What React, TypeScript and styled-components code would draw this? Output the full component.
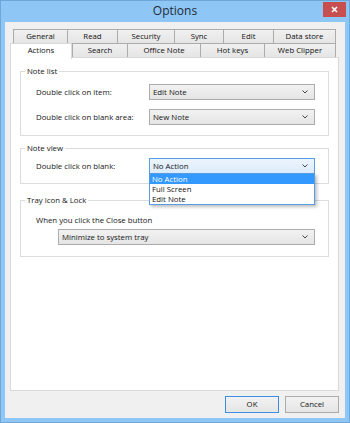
import * as React from 'react';
import styled, { createGlobalStyle, css } from 'styled-components';

const Global = createGlobalStyle`
  html, body {
    margin: 0;
    padding: 0;
    background: #8ec6f5;
  }
  body {
    font-family: 'Open Sans', 'Noto Sans', sans-serif;
    color: #151515;
  }
`;

const Window = styled.div`
  box-sizing: border-box;
  width: 350px;
  height: 423px;
  background: #8ec6f5;
  border: 1px solid #6ea6da;
  display: flex;
  flex-direction: column;
`;

const TitleBar = styled.div`
  height: 21px;
  display: grid;
  grid-template-columns: 1fr auto 1fr;
  align-items: start;
`;

const Title = styled.div`
  grid-column: 2;
  font-size: 12px;
  line-height: 20px;
  color: #1f2a36;
`;

const CloseButton = styled.div`
  grid-column: 3;
  justify-self: end;
  margin: 1px 3px 0 0;
  width: 23px;
  height: 15px;
  background: #c74f50;
  display: flex;
  align-items: center;
  justify-content: center;
`;

const Client = styled.div`
  flex: 1;
  margin: 0 4px 4px 4px;
  background: #f0f0f0;
  padding: 7px 5px 0 5px;
  display: flex;
  flex-direction: column;
`;

const TabRow = styled.div<{ $indent: number }>`
  display: flex;
  padding-left: ${p => p.$indent}px;
  height: 14px;
  align-items: flex-end;
`;

const Tab = styled.div<{ $w: number; $active?: boolean }>`
  box-sizing: border-box;
  width: ${p => p.$w}px;
  height: 14px;
  margin-right: -1px;
  border: 1px solid #acacac;
  border-bottom: none;
  background: linear-gradient(#f0f0f0, #e5e5e5);
  font-size: 7.8px;
  line-height: 12px;
  text-align: center;
  color: #111;
  ${p =>
    p.$active &&
    css`
      height: 16px;
      margin-bottom: -2px;
      position: relative;
      z-index: 1;
      background: #fff;
      border-color: #d9d9d9;
      line-height: 13px;
      margin-right: 0;
    `}
`;

const Panel = styled.div`
  box-sizing: border-box;
  width: 329px;
  height: 334px;
  background: #fff;
  border: 1px solid #d9d9d9;
  padding: 8px 9px 0 9px;
  display: flex;
  flex-direction: column;
`;

const Group = styled.fieldset<{ $gap: number; $pt: number; $pb: number; $rowGap: number }>`
  margin: ${p => p.$gap}px 0 0 0;
  padding: ${p => p.$pt}px 0 ${p => p.$pb}px 0;
  border: 1px solid #dcdcdc;
  box-shadow: inset 1px 1px 0 #fff;
  min-width: 0;
  display: flex;
  flex-direction: column;
  gap: ${p => p.$rowGap}px;
`;

const Legend = styled.legend`
  margin-left: 4px;
  padding: 0 2px;
  font-size: 7.8px;
  line-height: 10px;
`;

const Row = styled.div<{ $indent: number }>`
  display: flex;
  align-items: center;
  padding-left: ${p => p.$indent}px;
`;

const Label = styled.div<{ $w?: number }>`
  width: ${p => (p.$w ? `${p.$w}px` : 'auto')};
  font-size: 7.8px;
  line-height: 10px;
`;

const SelectWrap = styled.div`
  position: relative;
`;

const SelectBox = styled.div<{ $w: number; $focus?: boolean }>`
  box-sizing: border-box;
  width: ${p => p.$w}px;
  height: 16px;
  border: 1px solid #acacac;
  background: linear-gradient(#f2f2f2, #e5e5e5);
  display: flex;
  align-items: center;
  justify-content: space-between;
  padding: 0 6px 0 3px;
  font-size: 7.8px;
  ${p =>
    p.$focus &&
    css`
      border-color: #569de5;
      background: linear-gradient(#ecf4fc, #dcecfc);
    `}
`;

const DropList = styled.div`
  position: absolute;
  left: 0;
  top: 15px;
  box-sizing: border-box;
  width: 166px;
  border: 1px solid #569de5;
  background: #fff;
  box-shadow: 2px 2px 3px rgba(0, 0, 0, 0.25);
  z-index: 2;
`;

const DropItem = styled.div<{ $sel?: boolean }>`
  height: 10px;
  line-height: 10px;
  padding-left: 2px;
  font-size: 7.8px;
  background: ${p => (p.$sel ? '#3399ff' : '#fff')};
  color: ${p => (p.$sel ? '#fff' : '#111')};
`;

const Footer = styled.div`
  display: flex;
  justify-content: flex-end;
  gap: 6px;
  padding: 5px 1px 0 0;
`;

const Button = styled.div<{ $default?: boolean }>`
  box-sizing: border-box;
  width: 54px;
  height: 17px;
  border: 1px solid ${p => (p.$default ? '#3c8ee0' : '#acacac')};
  background: linear-gradient(#f2f2f2, #e5e5e5);
  font-size: 7.8px;
  line-height: 15px;
  text-align: center;
`;

const Chevron = () => (
  <svg width="6" height="4" viewBox="0 0 6 4">
    <polyline points="0.5,0.5 3,3 5.5,0.5" fill="none" stroke="#444" strokeWidth="1" />
  </svg>
);

function Select({ value, w, focus, children }: { value: string; w: number; focus?: boolean; children?: React.ReactNode }) {
  return (
    <SelectWrap>
      <SelectBox $w={w} $focus={focus}>
        <span>{value}</span>
        <Chevron />
      </SelectBox>
      {children}
    </SelectWrap>
  );
}

const row1 = [
  ['General', 55],
  ['Read', 51],
  ['Security', 58],
  ['Sync', 50],
  ['Edit', 51],
  ['Data store', 63],
] as const;

const row2 = [
  ['Search', 56],
  ['Office Note', 74],
  ['Hot keys', 65],
  ['Web Clipper', 72],
] as const;

export default function App() {
  return (
    <>
      <Global />
      <Window>
        <TitleBar>
          <Title>Options</Title>
          <CloseButton>
            <svg width="7" height="7" viewBox="0 0 7 7">
              <path d="M1 1 L6 6 M6 1 L1 6" stroke="#fff" strokeWidth="1.6" />
            </svg>
          </CloseButton>
        </TitleBar>
        <Client>
          <TabRow $indent={3}>
            {row1.map(([t, w]) => (
              <Tab key={t} $w={w}>
                {t}
              </Tab>
            ))}
          </TabRow>
          <TabRow $indent={0}>
            <Tab $w={62} $active>
              Actions
            </Tab>
            {row2.map(([t, w]) => (
              <Tab key={t} $w={w}>
                {t}
              </Tab>
            ))}
          </TabRow>
          <Panel>
            <Group $gap={0} $pt={8} $pb={10} $rowGap={9}>
              <Legend>Note list</Legend>
              <Row $indent={15}>
                <Label $w={113}>Double click on item:</Label>
                <Select value="Edit Note" w={166} />
              </Row>
              <Row $indent={15}>
                <Label $w={113}>Double click on blank area:</Label>
                <Select value="New Note" w={166} />
              </Row>
            </Group>
            <Group $gap={7} $pt={5} $pb={9} $rowGap={9}>
              <Legend>Note view</Legend>
              <Row $indent={15}>
                <Label $w={113}>Double click on blank:</Label>
                <Select value="No Action" w={166} focus>
                  <DropList>
                    <DropItem $sel>No Action</DropItem>
                    <DropItem>Full Screen</DropItem>
                    <DropItem>Edit Note</DropItem>
                  </DropList>
                </Select>
              </Row>
            </Group>
            <Group $gap={11} $pt={10} $pb={11} $rowGap={4}>
              <Legend>Tray icon &amp; Lock</Legend>
              <Row $indent={15}>
                <Label>When you click the Close button</Label>
              </Row>
              <Row $indent={37}>
                <Select value="Minimize to system tray" w={257} />
              </Row>
            </Group>
          </Panel>
          <Footer>
            <Button $default>OK</Button>
            <Button>Cancel</Button>
          </Footer>
        </Client>
      </Window>
    </>
  );
}
